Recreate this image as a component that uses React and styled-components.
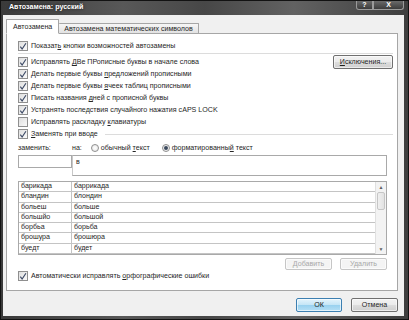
import React from 'react';
import styled, { createGlobalStyle } from 'styled-components';

const Global = createGlobalStyle`
  html, body { margin: 0; padding: 0; background: #2a2a2a; }
  body { font-family: "Liberation Sans", Arial, sans-serif; }
  * { box-sizing: border-box; }
`;

const Win = styled.div`
  width: 409px;
  height: 320px;
  display: flex;
  flex-direction: column;
  background: linear-gradient(90deg, #3a3a3a, #585858 30%, #474747 50%, #626262 72%, #3e3e3e);
  border: 1px solid #121212;
  padding: 0 4px 3px 2px;
`;

const TitleBar = styled.div`
  height: 14px;
  display: flex;
  align-items: flex-start;
`;

const Title = styled.div`
  color: #fff;
  font-weight: bold;
  font-size: 7.1px;
  line-height: 13px;
  padding-left: 6px;
  flex: 1;
  text-shadow: 0 0 3px rgba(0,0,0,0.7);
`;

const CaptionBtn = styled.div`
  width: ${p => p.$w}px;
  height: 9px;
  border: 1px solid #9a9a9a;
  border-top: none;
  background: linear-gradient(#6a6a6a, #3c3c3c);
  color: #fff;
  font-size: 7px;
  font-weight: bold;
  line-height: 8px;
  text-align: center;
  border-radius: ${p => p.$r};
`;

const Client = styled.div`
  flex: 1;
  display: flex;
  flex-direction: column;
  background: #f0f0f0;
  padding: 4px 6px 4px 3px;
  color: #262626;
  font-size: 7.1px;
`;

const Tabs = styled.div`
  display: flex;
  align-items: flex-end;
  height: 15px;
  margin-bottom: -1px;
  position: relative;
  z-index: 1;
`;

const Tab = styled.div`
  height: ${p => (p.$active ? 15 : 11)}px;
  padding: 0 ${p => (p.$active ? 6 : 5)}px;
  border: 1px solid #a6a6a6;
  border-bottom: ${p => (p.$active ? '1px solid #fff' : '1px solid #a6a6a6')};
  ${p => (p.$active ? '' : 'border-left: none;')}
  background: ${p => (p.$active ? '#fff' : 'linear-gradient(#f6f6f6, #e2e2e2)')};
  display: flex;
  align-items: center;
  white-space: nowrap;
  border-radius: 1px 1px 0 0;
`;

const Panel = styled.div`
  flex: 1;
  background: #fff;
  border: 1px solid #a6a6a6;
  padding: 6px 4px 8px 11px;
  display: flex;
  flex-direction: column;
`;

const Row = styled.div`
  height: 12px;
  display: flex;
  align-items: center;
  gap: 3px;
  white-space: nowrap;
`;

const Spacer = styled.div`
  flex: 1;
`;

const Separator = styled.div`
  height: 1px;
  background: #dcdcdc;
  margin: 1px 0 2px;
`;

const Rule = styled.div`
  flex: 1;
  height: 1px;
  background: #dcdcdc;
  margin-left: 4px;
`;

const Box = styled.span`
  width: 10px;
  height: 10px;
  flex: none;
  border: 1px solid #8f8f8f;
  background: linear-gradient(135deg, #dedede, #fafafa);
  display: flex;
  align-items: center;
  justify-content: center;
`;

const Btn = styled.div`
  height: ${p => p.$h || 14}px;
  width: ${p => p.$w}px;
  border: 1px solid ${p => (p.$disabled ? '#c6c6c6' : p.$def ? '#3c7fb1' : '#707070')};
  border-radius: 2px;
  background: ${p =>
    p.$disabled
      ? '#f4f4f4'
      : p.$def
      ? 'linear-gradient(#e5f4fc 0%, #c4e5f6 50%, #98d1ef 51%, #b6e0f5 100%)'
      : 'linear-gradient(#f2f2f2 0%, #ebebeb 50%, #dddddd 51%, #cfcfcf 100%)'};
  color: ${p => (p.$disabled ? '#a8a8a8' : '#1e1e1e')};
  display: flex;
  align-items: center;
  justify-content: center;
  box-shadow: inset 0 0 0 1px rgba(255,255,255,0.6);
  flex: none;
`;

const ExcBtn = styled(Btn)`
  margin: -1px 0;
`;

const LabelsRow = styled.div`
  height: 12px;
  margin-top: 2px;
  display: flex;
  align-items: center;
  white-space: nowrap;
`;

const FieldLabel = styled.span`
  width: ${p => p.$w}px;
  flex: none;
`;

const Radio = styled.span`
  width: 8px;
  height: 8px;
  border-radius: 50%;
  border: 1px solid #8f8f8f;
  background: radial-gradient(circle, #fff 0%, #e4e4e4 100%);
  display: inline-flex;
  align-items: center;
  justify-content: center;
  margin: 0 2px 0 ${p => p.$ml}px;
  flex: none;
  &::after {
    content: '';
    display: ${p => (p.$on ? 'block' : 'none')};
    width: 4px;
    height: 4px;
    border-radius: 50%;
    background: #3b4a5e;
  }
`;

const Inputs = styled.div`
  display: flex;
  align-items: flex-start;
  margin-top: 1px;
  margin-right: 6px;
`;

const Field = styled.div`
  width: ${p => p.$w}px;
  flex: ${p => (p.$grow ? 1 : 'none')};
  height: ${p => p.$h}px;
  border: 1px solid #a9a9a9;
  ${p => (p.$grow ? 'border-left: 1px solid #c8c8c8;' : '')}
  background: #fff;
  padding: 2px 3px;
  line-height: 8px;
`;

const List = styled.div`
  margin-top: 5px;
  margin-right: 6px;
  height: 74px;
  border: 1px solid #a9a9a9;
  display: flex;
  overflow: hidden;
`;

const ListBody = styled.div`
  flex: 1;
  display: flex;
  flex-direction: column;
`;

const ListRow = styled.div`
  height: 10.3px;
  flex: none;
  display: flex;
  border-bottom: 1px solid #c4c4c4;
  line-height: 9px;
`;

const Cell = styled.div`
  width: ${p => (p.$first ? '53px' : 'auto')};
  flex: ${p => (p.$first ? 'none' : 1)};
  padding-left: 2px;
  ${p => (p.$first ? 'border-right: 1px solid #c4c4c4;' : '')}
  white-space: nowrap;
`;

const Scroll = styled.div`
  width: 11px;
  flex: none;
  border-left: 1px solid #e0e0e0;
  background: #f3f3f3;
  display: flex;
  flex-direction: column;
  align-items: stretch;
`;

const Arrow = styled.div`
  height: 10px;
  display: flex;
  align-items: center;
  justify-content: center;
  color: #606060;
  font-size: 5px;
`;

const Thumb = styled.div`
  height: 18px;
  margin: 0 1px;
  border: 1px solid #c6c6c6;
  border-radius: 2px;
  background: linear-gradient(90deg, #f0f0f0, #e2e2e2);
`;

const ButtonsRow = styled.div`
  display: flex;
  justify-content: flex-end;
  gap: 8px;
  margin-top: 3px;
  margin-right: 6px;
  height: 12px;
`;

const Footer = styled.div`
  height: 14px;
  margin-top: 7px;
  display: flex;
  justify-content: flex-end;
  gap: 9px;
`;

const Check = ({ on }) => (
  <Box>
    {on && (
      <svg width="9" height="9" viewBox="0 0 9 9">
        <path d="M1.5 4.6 L3.5 7.4 L7.8 0.8" fill="none" stroke="#3f4c68" strokeWidth="1.3" />
      </svg>
    )}
  </Box>
);

const CheckRow = ({ on = true, children }) => (
  <Row>
    <Check on={on} />
    <span>{children}</span>
  </Row>
);

const data = [
  ['барикада', 'баррикада'],
  ['бландин', 'блондин'],
  ['больеш', 'больше'],
  ['большйо', 'большой'],
  ['борбьа', 'борьба'],
  ['брошура', 'брошюра'],
  ['буедт', 'будет'],
];

export default function App() {
  return (
    <>
      <Global />
      <Win>
        <TitleBar>
          <Title>Автозамена: русский</Title>
          <CaptionBtn $w={17} $r="0 0 0 3px">?</CaptionBtn>
          <CaptionBtn $w={31} $r="0 0 3px 0">X</CaptionBtn>
        </TitleBar>
        <Client>
          <Tabs>
            <Tab $active>Автозамена</Tab>
            <Tab>Автозамена математических символов</Tab>
          </Tabs>
          <Panel>
            <CheckRow>Показат<u>ь</u> кнопки возможностей автозамены</CheckRow>
            <Separator />
            <Row>
              <Check on />
              <span>Исправлять <u>Д</u>Ве ПРописные буквы в начале слова</span>
              <Spacer />
              <ExcBtn $w={60} $h={14}><span><u>И</u>сключения...</span></ExcBtn>
            </Row>
            <CheckRow>Делать первые буквы <u>п</u>редложений прописными</CheckRow>
            <CheckRow>Делать первые буквы <u>я</u>чеек таблиц прописными</CheckRow>
            <CheckRow>Писать названия <u>д</u>ней с прописной буквы</CheckRow>
            <CheckRow>Устранять последствия случайного нажатия cAPS LOCK</CheckRow>
            <CheckRow on={false}>Исправлять раскладку <u>к</u>лавиатуры</CheckRow>
            <Row>
              <Check on />
              <span><u>З</u>аменять при вводе</span>
              <Rule />
            </Row>
            <LabelsRow>
              <FieldLabel $w={54}>заменить:</FieldLabel>
              <span>на:</span>
              <Radio $ml={9} />
              <span>обычный <u>т</u>екст</span>
              <Radio $ml={12} $on />
              <span>форматированны<u>й</u> текст</span>
            </LabelsRow>
            <Inputs>
              <Field $w={54} $h={13} />
              <Field $grow $h={21}>в</Field>
            </Inputs>
            <List>
              <ListBody>
                {data.map(([a, b]) => (
                  <ListRow key={a}>
                    <Cell $first>{a}</Cell>
                    <Cell>{b}</Cell>
                  </ListRow>
                ))}
              </ListBody>
              <Scroll>
                <Arrow>▲</Arrow>
                <Thumb />
                <Spacer />
                <Arrow>▼</Arrow>
              </Scroll>
            </List>
            <ButtonsRow>
              <Btn $w={47} $h={12} $disabled>Добавить</Btn>
              <Btn $w={47} $h={12} $disabled>Удалить</Btn>
            </ButtonsRow>
            <CheckRow>Автоматически исправлять <u>о</u>рфографические ошибки</CheckRow>
          </Panel>
          <Footer>
            <Btn $w={46} $def>ОК</Btn>
            <Btn $w={47}>Отмена</Btn>
          </Footer>
        </Client>
      </Win>
    </>
  );
}
